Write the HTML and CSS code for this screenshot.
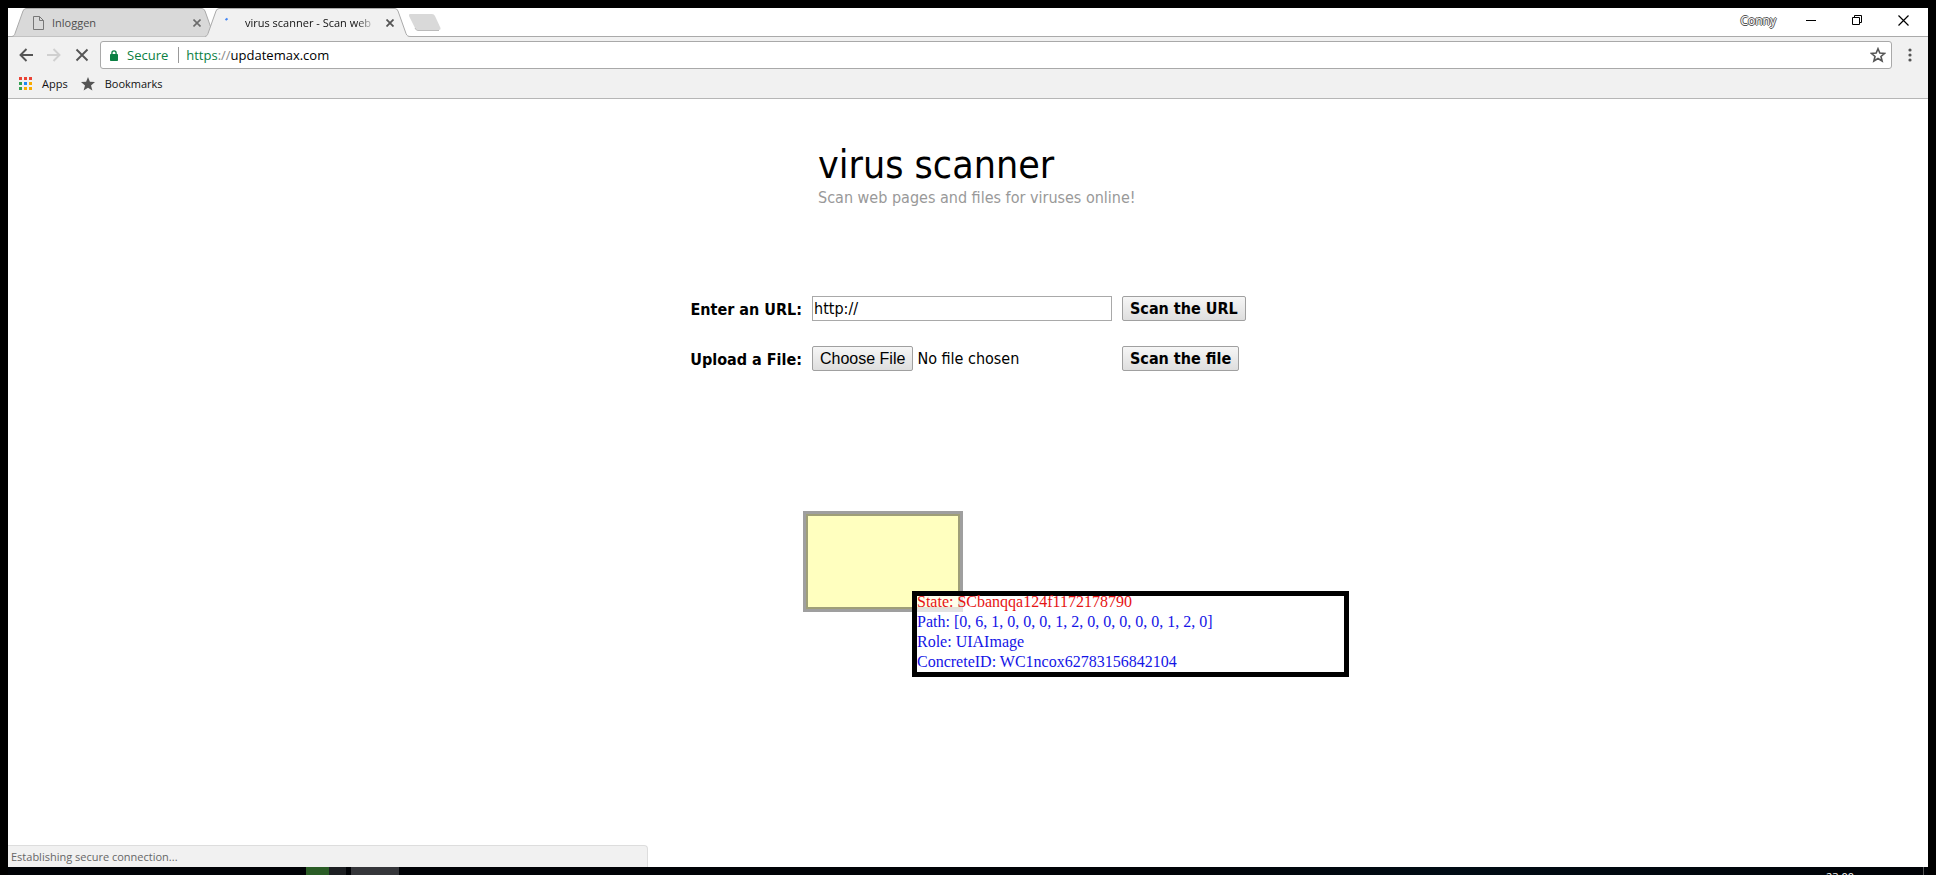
FILE: index.html
```html
<!DOCTYPE html>
<html lang="en">
<head>
<meta charset="utf-8">
<title>virus scanner - Scan web pages and files</title>
<link rel="stylesheet" href="styles.css">
</head>
<body>
<div class="window">
  <header class="chrome">
    <div class="tabstrip">
      <div class="tabs">
        <div class="tab">
          <svg class="tab-shape" viewBox="0 0 206 29" preserveAspectRatio="none"><path d="M0 28.5C2 28 2.500 27 3 25.500L11 3Q12 .5 14 .5H190Q192 .5 193 3L201 25.500C202 28 203 28.500 206 28.500" fill="#d9d9d9" stroke="#aaa"/></svg>
          <svg class="page-icon" viewBox="0 0 11 14"><path d="M.5.5H6.500L10.500 4.500V13.500H.5ZM6.500.5V4.500H10.500" fill="none" stroke="#777"/></svg>
          <span class="tab-title">Inloggen</span>
          <button class="tab-close" aria-label="Close Inloggen"><svg viewBox="0 0 8 8"><path d="M.5.5L7.500 7.500M7.500.5L.5 7.500" stroke="#6b6b6b" stroke-width="1.600"/></svg></button>
        </div>
        <div class="tab active">
          <svg class="tab-shape" viewBox="0 0 206 29" preserveAspectRatio="none"><path d="M0 29V28.500C2 28 2.500 27 3 25.500L11 3Q12 .5 14 .5H190Q192 .5 193 3L201 25.500C202 28 203 28.500 206 28.500V29Z" fill="#f1f1f1"/><path d="M0 28.500C2 28 2.500 27 3 25.500L11 3Q12 .5 14 .5H190Q192 .5 193 3L201 25.500C202 28 203 28.500 206 28.500" fill="none" stroke="#aaa"/></svg>
          <svg class="spinner" viewBox="0 0 16 16"><path d="M1.500 5L3.500 3.500" stroke="#4285f4" stroke-width="2"/></svg>
          <span class="tab-title fade">virus scanner - Scan web</span>
          <button class="tab-close" aria-label="Close virus scanner"><svg viewBox="0 0 8 8"><path d="M.5.5L7.500 7.500M7.500.5L.5 7.500" stroke="#555" stroke-width="1.800"/></svg></button>
        </div>
        <button class="new-tab" aria-label="New tab"><svg viewBox="0 0 36 19"><path d="M3 1H25Q27 1 28 3L33.500 15Q34 17 32 17H11Q9 17 8 15L2 3Q1.500 1 3 1Z" fill="#d9d9d9"/><path d="M8 15Q9 17.500 11 17.500H32" fill="none" stroke="#bbb"/></svg></button>
      </div>
      <div class="controls">
        <span class="profile">Conny</span>
        <button aria-label="Minimize"><svg viewBox="0 0 11 11"><path d="M0 5.500H10" stroke="#000"/></svg></button>
        <button aria-label="Restore"><svg viewBox="0 0 11 11"><path d="M.5 2.500H7.500V9.500H.5ZM2.500 2.500V.5H9.500V7.500H7.500" fill="none" stroke="#000"/></svg></button>
        <button aria-label="Close"><svg viewBox="0 0 11 11"><path d="M.5.5L10.500 10.500M10.500.5L.5 10.500" stroke="#000" stroke-width="1.200"/></svg></button>
      </div>
    </div>
    <div class="toolbar">
      <button class="nav" aria-label="Back"><svg viewBox="0 0 14 14"><path d="M14 7H1.500M7.500 1L1.500 7L7.500 13" fill="none" stroke="#555" stroke-width="1.900"/></svg></button>
      <button class="nav" aria-label="Forward"><svg viewBox="0 0 14 14"><path d="M0 7H12.500M6.500 1L12.500 7L6.500 13" fill="none" stroke="#d0d0d0" stroke-width="1.900"/></svg></button>
      <button class="nav" aria-label="Stop loading"><svg viewBox="0 0 14 14"><path d="M1.500 1.500L12.500 12.500M12.500 1.500L1.500 12.500" stroke="#555" stroke-width="1.900"/></svg></button>
      <div class="omnibox">
        <svg class="lock" viewBox="0 0 8 11"><path d="M1.900 5V3Q1.900 .8 4 .8T6.100 3V5" fill="none" stroke="#0b8043" stroke-width="1.300"/><rect y="4" width="8" height="7" rx=".8" fill="#0b8043"/></svg>
        <span class="secure">Secure</span>
        <span class="url"><span class="scheme">https</span><span class="slashes">://</span>updatemax.com</span>
        <button class="star" aria-label="Bookmark this page"><svg viewBox="0 0 14 14"><path d="M7 1.500L8.600 5.200L12.800 5.600L9.600 8.300L10.600 12.300L7 10.100L3.400 12.300L4.400 8.300L1.200 5.600L5.400 5.200Z" fill="none" stroke="#555" stroke-width="1.400"/></svg></button>
      </div>
      <button class="menu" aria-label="Menu"><svg viewBox="0 0 4 14"><g fill="#555"><circle cx="2" cy="2" r="1.600"/><circle cx="2" cy="7" r="1.600"/><circle cx="2" cy="12" r="1.600"/></g></svg></button>
    </div>
    <nav class="bookmarks">
      <a href="#"><svg viewBox="0 0 13 13"><path d="M0 0h3v3H0zM5 0h3v3H5zM10 0h3v3h-3z" fill="#ea4335"/><path d="M0 5h3v3H0zM0 10h3v3H0z" fill="#34a053"/><path d="M5 5h3v3H5z" fill="#1e88f5"/><path d="M10 5h3v3h-3zM5 10h3v3H5zM10 10h3v3h-3z" fill="#f9ab00"/></svg>Apps</a>
      <a href="#"><svg class="solid-star" viewBox="0 0 14 14"><path d="M7 0L8.900 4.800L14 5.100L10 8.400L11.400 13.500L7 10.700L2.600 13.500L4 8.400L0 5.100L5.100 4.800Z" fill="#555"/></svg>Bookmarks</a>
    </nav>
  </header>
  <main class="page">
    <div class="heading">
      <h1>virus scanner</h1>
      <p>Scan web pages and files for viruses online!</p>
    </div>
    <form class="scan">
      <label for="url">Enter an URL:</label>
      <input id="url" type="text" value="http://">
      <button type="button">Scan the URL</button>
      <label for="file">Upload a File:</label>
      <input id="file" type="file">
      <button type="button">Scan the file</button>
    </form>
    <div class="highlight"></div>
    <div class="tooltip">
      <p class="state">State: SCbanqqa124f1172178790</p>
      <p>Path: [0, 6, 1, 0, 0, 0, 1, 2, 0, 0, 0, 0, 0, 1, 2, 0]</p>
      <p>Role: UIAImage</p>
      <p>ConcreteID: WC1ncox62783156842104</p>
    </div>
    <div class="status">Establishing secure connection...</div>
  </main>
</div>
<footer class="taskbar">
  <span class="task green"></span><span class="task dark"></span><span class="task gray"></span>
  <span class="clock">23:00</span>
  <span class="peek"></span>
</footer>
</body>
</html>
```

FILE: styles.css
```css
* { box-sizing: border-box; }
body {
  margin: 0;
  height: 100vh;
  padding: 8px 8px 0;
  display: flex;
  flex-direction: column;
  overflow: hidden;
  background: #000;
  color: #000;
  font-family: "Open Sans", "Noto Sans", sans-serif;
}
h1, p { margin: 0; font-weight: normal; }
svg { display: block; }
.chrome button {
  display: grid;
  place-items: center;
  padding: 0;
  border: 0;
  background: none;
}
.window {
  flex: 1;
  min-height: 0;
  display: flex;
  flex-direction: column;
  background: #fff;
}
.chrome { background: #f1f1f1; border-bottom: 1px solid #b6b6b6; font-size: 11px; }

.tabstrip {
  height: 29px;
  display: flex;
  justify-content: space-between;
  background: linear-gradient(#aaa, #aaa) bottom / 100% 1px no-repeat #fff;
}
.tabs { display: flex; padding-left: 4px; }
.tab {
  position: relative;
  width: 206px;
  height: 29px;
  margin-right: -13px;
  padding: 0 15px 0 21px;
  display: flex;
  align-items: center;
  color: #4d4d4d;
}
.tab.active { z-index: 1; padding-left: 19px; color: #111; }
.tab > * { position: relative; }
.tab > .tab-shape { position: absolute; inset: 0; width: 100%; height: 100%; }
.page-icon { width: 11px; height: 14px; }
.spinner { width: 16px; height: 16px; }
.tab-title { flex: 1; margin-left: 8px; overflow: hidden; white-space: nowrap; }
.tab.active .tab-title { margin-left: 5px; }
.fade { mask-image: linear-gradient(to right, #000 85%, transparent); }
.tab-close { width: 12px; height: 12px; margin-left: 8px; }
.tab-close svg { width: 8px; height: 8px; }
.chrome .new-tab { width: 36px; margin-left: 9px; padding-bottom: 1px; }
.new-tab svg { width: 36px; height: 19px; }
.controls { display: flex; align-items: center; padding: 0 2px 4px 0; }
.profile { margin-right: 12px; color: #fff; font-size: 12px; text-shadow: 1px 0 #555, -1px 0 #555, 0 1px #555, 0 -1px #555; }
.controls button { width: 46px; height: 26px; }
.controls svg { width: 11px; height: 11px; }

.toolbar { display: flex; align-items: center; padding: 4px 7px 0 4px; }
.nav { width: 28px; height: 28px; }
.nav svg { width: 14px; height: 14px; }
.omnibox {
  flex: 1;
  height: 28px;
  margin-left: 4px;
  padding: 0 5px 0 9px;
  display: flex;
  align-items: center;
  border: 1px solid #a9a9a9;
  border-radius: 3px;
  background: #fff;
  font-size: 13px;
}
.lock { width: 8px; height: 11px; }
.secure { margin-left: 9px; padding-right: 10px; border-right: 1px solid #999; color: #0b8043; line-height: 16px; }
.url { flex: 1; margin-left: 7px; }
.scheme { color: #0b8043; }
.slashes { color: #888; }
.star svg { width: 16px; height: 16px; }
.menu { width: 22px; height: 28px; margin-left: 7px; }
.menu svg { width: 4px; height: 14px; }
.bookmarks { display: flex; gap: 13px; height: 29px; padding-left: 11px; align-items: center; }
.bookmarks a { display: flex; align-items: center; gap: 10px; color: #111; text-decoration: none; }
.bookmarks svg { width: 13px; height: 13px; }
.bookmarks .solid-star { width: 14px; height: 14px; }

.page {
  position: relative;
  flex: 1;
  display: flex;
  flex-direction: column;
  align-items: center;
  font-family: "DejaVu Sans Condensed", "Noto Sans", sans-serif;
  font-size: 16px;
}
.heading { width: 308px; margin: 43px 0 0 8px; }
h1 { font-size: 39px; line-height: 46px; white-space: nowrap; }
.heading p { color: #999; line-height: 20px; white-space: nowrap; }
.scan {
  display: grid;
  grid-template-columns: 120px 300px 124px;
  column-gap: 10px;
  row-gap: 25px;
  margin-top: 88px;
  padding-right: 8px;
  align-items: center;
  justify-items: start;
}
.scan label { justify-self: end; padding-top: 1px; font-weight: bold; white-space: nowrap; }
.scan input { font: inherit; width: 100%; }
.scan input[type="text"] { height: 25px; padding: 1px; border: 1px solid #a9a9a9; }
.scan button, .scan input::file-selector-button {
  height: 25px;
  padding: 0 7px;
  border: 1px solid #a0a0a0;
  border-radius: 2px;
  background: linear-gradient(#f6f6f6, #dedede);
  color: #000;
}
.scan button { font: inherit; font-weight: bold; white-space: nowrap; }
.scan input::file-selector-button { font: 16px "Liberation Sans", Arial, sans-serif; margin-right: 4px; }

.highlight {
  position: absolute;
  left: calc(50% - 165px);
  top: 412px;
  width: 160px;
  height: 101px;
  border: 3px solid #9f9f9f;
  outline: 2px solid #9f9f78;
  outline-offset: -5px;
  background: #ffffbf;
}
.tooltip {
  position: absolute;
  left: calc(50% - 56px);
  top: 492px;
  width: 437px;
  border: 5px solid #000;
  background: rgba(255, 255, 255, .7);
  background-clip: padding-box;
  color: #1414e6;
  font: 16px/20px "Liberation Serif", "Times New Roman", serif;
}
.tooltip .state { margin-top: -4px; color: #e61414; }
.status {
  position: absolute;
  left: 0;
  bottom: 0;
  width: calc(100% / 3);
  height: 22px;
  padding-left: 3px;
  border: solid #ddd;
  border-width: 1px 1px 0 0;
  border-radius: 0 4px 0 0;
  background: #f1f1f1;
  color: #666;
  font: 11px/21px "Open Sans", sans-serif;
}
.taskbar {
  height: 8px;
  display: flex;
  overflow: hidden;
  padding: 0 4px 0 298px;
  background: linear-gradient(to right, #000206, #000206 60%, #000b14 75%, #000206);
}
.task { height: 8px; }
.green { width: 23px; background: #2a5c26; }
.dark { width: 17px; background: #1c1f22; }
.gray { width: 48px; margin-left: 5px; background: #35363a; }
.clock { margin: 2px 69px 0 auto; color: #fff; font-size: 11px; line-height: 15px; }
.peek { width: 1px; height: 8px; background: #555; }
```
